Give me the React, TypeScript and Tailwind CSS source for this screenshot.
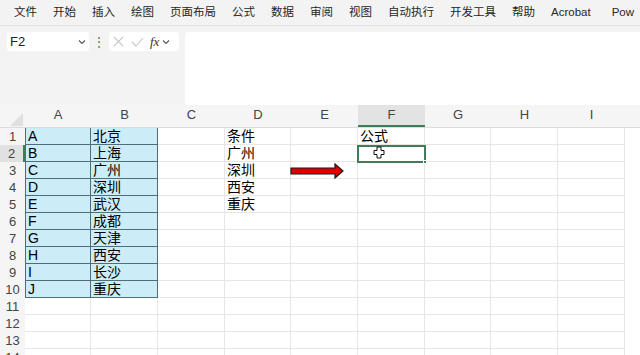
import React from 'react';

const menus = ['文件', '开始', '插入', '绘图', '页面布局', '公式', '数据', '审阅', '视图', '自动执行', '开发工具', '帮助', 'Acrobat'];
const columns = [
  { name: 'A', w: 'w-[66px]' },
  { name: 'B', w: 'w-[67px]' },
  { name: 'C', w: 'w-[67px]' },
  { name: 'D', w: 'w-[66px]' },
  { name: 'E', w: 'w-[67px]' },
  { name: 'F', w: 'w-[67px]' },
  { name: 'G', w: 'w-[66px]' },
  { name: 'H', w: 'w-[67px]' },
  { name: 'I', w: 'w-[67px]' },
];

const colA = ['A', 'B', 'C', 'D', 'E', 'F', 'G', 'H', 'I', 'J'];
const colB = ['北京', '上海', '广州', '深圳', '武汉', '成都', '天津', '西安', '长沙', '重庆'];
const colD = ['条件', '广州', '深圳', '西安', '重庆'];

const font = { fontFamily: '"Liberation Sans", "Noto Sans CJK SC", sans-serif' };

function cellValue(row: number, col: number) {
  if (col === 0 && row < 10) return colA[row];
  if (col === 1 && row < 10) return colB[row];
  if (col === 3 && row < 5) return colD[row];
  if (col === 5 && row === 0) return '公式';
  return '';
}

function Chevron({ className }: { className?: string }) {
  return (
    <svg className={className} width="8" height="6" viewBox="0 0 8 6" fill="none">
      <path d="M1 1.5 L4 4.5 L7 1.5" stroke="#555" strokeWidth="1.1" />
    </svg>
  );
}

export default function App() {
  return (
    <div className="w-[640px] h-[355px] overflow-hidden bg-white relative" style={font}>
      {/* menu bar */}
      <div className="h-[26px] bg-[#f3f3f3] border-b border-[#e3e3e3] flex items-center pl-[14px] gap-[16px] text-[11.5px] text-[#262626] whitespace-nowrap">
        {menus.map((m) => (
          <span key={m}>{m}</span>
        ))}
        <span className="ml-[5px]">Pow</span>
      </div>

      {/* formula area */}
      <div className="h-[79px] bg-[#f3f3f3] flex items-start pt-[6px]">
        <div className="ml-[7px] w-[82px] h-[19px] bg-white rounded-[3px] flex items-center justify-between px-[3px] text-[13px] text-[#222]">
          <span>F2</span>
          <Chevron />
        </div>
        <div className="w-[20px] h-[19px] flex items-center justify-center text-[#666] text-[12px]">⋮</div>
        <div className="w-[70px] h-[19px] bg-white rounded-[3px] flex items-center pl-[4px] gap-[7px]">
          <svg width="11" height="11" viewBox="0 0 11 11">
            <path d="M1 1 L10 10 M10 1 L1 10" stroke="#c8c8c8" strokeWidth="1.1" />
          </svg>
          <svg width="13" height="10" viewBox="0 0 13 10">
            <path d="M1 5 L5 9 L12 1" stroke="#c8c8c8" strokeWidth="1.1" fill="none" />
          </svg>
          <span className="text-[13px] italic text-[#333] -ml-[1px]" style={{ fontFamily: '"Liberation Serif", serif' }}>
            fx
          </span>
          <Chevron className="-ml-[4px]" />
        </div>
        <div className="ml-[6px] flex-1 h-[73px] bg-white rounded-tl-[3px]" />
      </div>

      {/* column headers */}
      <div className="h-[23px] bg-[#f5f5f5] flex border-b border-[#dcdcdc]">
        <div className="w-[25px] relative">
          <svg className="absolute right-[2px] bottom-[1px]" width="13" height="13" viewBox="0 0 13 13">
            <path d="M13 0 L13 13 L0 13 Z" fill="#e0e0e0" />
          </svg>
        </div>
        {columns.map((c) => (
          <div
            key={c.name}
            className={`${c.w} shrink-0 flex items-end justify-center pb-[1px] text-[13px] text-[#444] ${
              c.name === 'F' ? 'bg-[#e3e3e3] border-b-2 border-[#3f7d5a]' : 'border-b-2 border-transparent'
            }`}
          >
            {c.name}
          </div>
        ))}
      </div>

      {/* grid rows */}
      <div className="flex flex-col">
        {Array.from({ length: 14 }).map((_, r) => (
          <div key={r} className="flex h-[17px] shrink-0">
            <div
              className={`w-[25px] shrink-0 flex items-center justify-center text-[13px] text-[#444] ${
                r === 1 ? 'bg-[#e1e1e1] border-r-2 border-[#3f7d5a]' : 'bg-[#f5f5f5]'
              }`}
            >
              {r + 1}
            </div>
            {columns.map((c, ci) => {
              const blue = r < 10 && ci < 2;
              return (
                <div
                  key={c.name}
                  className={`${c.w} shrink-0 flex items-center pl-[2px] text-[14px] leading-none text-black whitespace-nowrap ${
                    blue
                      ? `bg-[#ccedf8] border-b border-r border-[#4f6f78] ${ci === 0 ? 'border-l' : ''}`
                      : 'border-b border-r border-[#e6e6e6]'
                  }`}
                >
                  {cellValue(r, ci)}
                </div>
              );
            })}
          </div>
        ))}
      </div>

      {/* selected cell F2 */}
      <div className="absolute left-[357px] top-[145px] w-[69px] h-[18px] border-2 border-[#3f7d5a]">
        <div className="absolute -right-[3px] -bottom-[3px] w-[4px] h-[4px] bg-[#3f7d5a] border border-white" />
      </div>

      {/* cursor */}
      <svg className="absolute left-[373px] top-[146px]" width="12" height="13" viewBox="0 0 12 13">
        <path d="M4 1 H8 V4.5 H11 V8.5 H8 V12 H4 V8.5 H1 V4.5 H4 Z" fill="white" stroke="#111" strokeWidth="1" />
      </svg>

      {/* red arrow */}
      <svg className="absolute left-[290px] top-[163px]" width="54" height="16" viewBox="0 0 54 16">
        <path d="M1 5 H45 V1 L53 8 L45 15 V11 H1 Z" fill="#e00000" stroke="#1a1a1a" strokeWidth="1.2" />
      </svg>
    </div>
  );
}
